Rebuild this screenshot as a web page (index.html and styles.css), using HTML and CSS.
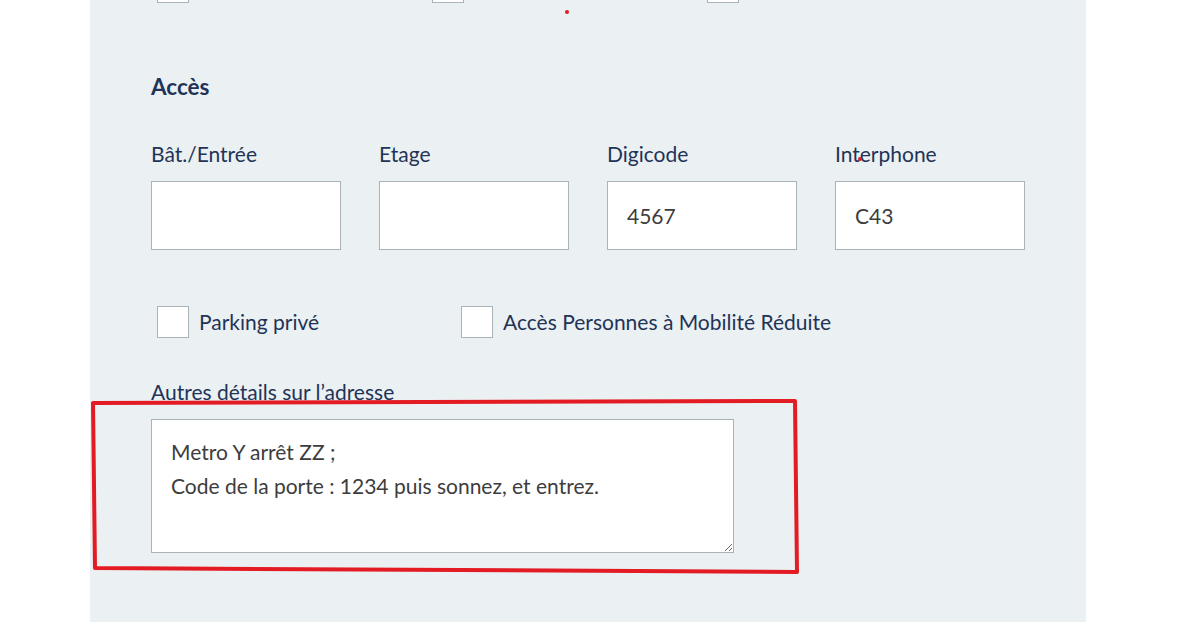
FILE: index.html
```html
<!DOCTYPE html>
<html lang="fr">
<head>
  <meta charset="UTF-8" />
  <meta name="viewport" content="width=device-width, initial-scale=1.0"/>
  <title>Adresse - Accès</title>
  <link rel="stylesheet" href="styles.css">
</head>
<body>

<div class="panel">
  <div class="top-row">
    <span class="check"></span>
    <span class="check"></span>
    <span class="check"></span>
  </div>

  <h2 class="section-title">Accès</h2>

  <div class="fields">
    <div class="field">
      <label for="bat">Bât./Entrée</label>
      <input type="text" id="bat">
    </div>
    <div class="field">
      <label for="etage">Etage</label>
      <input type="text" id="etage">
    </div>
    <div class="field">
      <label for="digicode">Digicode</label>
      <input type="text" id="digicode" value="4567">
    </div>
    <div class="field">
      <label for="interphone">Interphone</label>
      <input type="text" id="interphone" value="C43">
    </div>
  </div>

  <div class="options">
    <label class="option option-parking"><span class="check"></span>Parking privé</label>
    <label class="option"><span class="check"></span>Accès Personnes à Mobilité Réduite</label>
  </div>

  <div class="details">
    <label for="details">Autres détails sur l’adresse</label>
    <textarea id="details">Metro Y arrêt ZZ ;
Code de la porte : 1234 puis sonnez, et entrez.</textarea>
  </div>
</div>

<!-- annotation drawn over the screenshot -->
<svg class="annotation" width="1177" height="622" viewBox="0 0 1177 622">
  <path d="M93 403 L795 401 L797 572 L95 568 Z" fill="none" stroke="#e31b23" stroke-width="4" stroke-linejoin="round"/>
  <circle cx="567" cy="12" r="2" fill="#e31b23"/>
  <circle cx="860" cy="159" r="2" fill="#e31b23"/>
</svg>

</body>
</html>
```

FILE: styles.css
```css
body {
  margin: 0;
  padding: 0;
  background: #fff;
  font-family: Lato, 'Open Sans', sans-serif;
  color: #1f3457;
  overflow: hidden;
}
.panel {
  margin-left: 90px;
  width: 996px;
  min-height: 660px;
  box-sizing: border-box;
  padding: 0 61px;
  background: #ebf0f3;
}
.check {
  display: inline-block;
  width: 30px;
  height: 30px;
  background: #fff;
  border: 1px solid #a9b3ba;
  flex-shrink: 0;
}
.top-row {
  display: flex;
  gap: 243px;
  padding-left: 6px;
  margin-top: -29px;
}
.section-title {
  margin: 0;
  padding-top: 70px;
  font-size: 22.5px;
  font-weight: bold;
  line-height: 28px;
}
.fields {
  display: flex;
  gap: 38px;
  margin-top: 40px;
}
.field {
  display: flex;
  flex-direction: column;
  width: 190px;
}
.field label, .details label {
  font-size: 21px;
  line-height: 26px;
  margin-bottom: 14px;
}
input[type="text"] {
  box-sizing: border-box;
  width: 190px;
  height: 69px;
  border: 1px solid #a9b3ba;
  padding: 0 19px;
  font-family: inherit;
  font-size: 21px;
  color: #3d3d3d;
  background: #fff;
  outline: none;
}
.options {
  display: flex;
  margin-top: 56px;
  padding-left: 6px;
}
.option {
  display: flex;
  align-items: center;
  gap: 10px;
  font-size: 21px;
  line-height: 32px;
}
.option-parking { width: 304px; }
.details {
  display: flex;
  flex-direction: column;
  margin-top: 41px;
}
.details label { margin-bottom: 14px; }
textarea {
  box-sizing: border-box;
  width: 583px;
  height: 134px;
  border: 1px solid #a9b3ba;
  padding: 15px 19px;
  font-family: inherit;
  font-size: 21px;
  line-height: 34px;
  color: #3d3d3d;
  background: #fff;
  outline: none;
}
.annotation {
  position: absolute;
  top: 0;
  left: 0;
  pointer-events: none;
}
```
